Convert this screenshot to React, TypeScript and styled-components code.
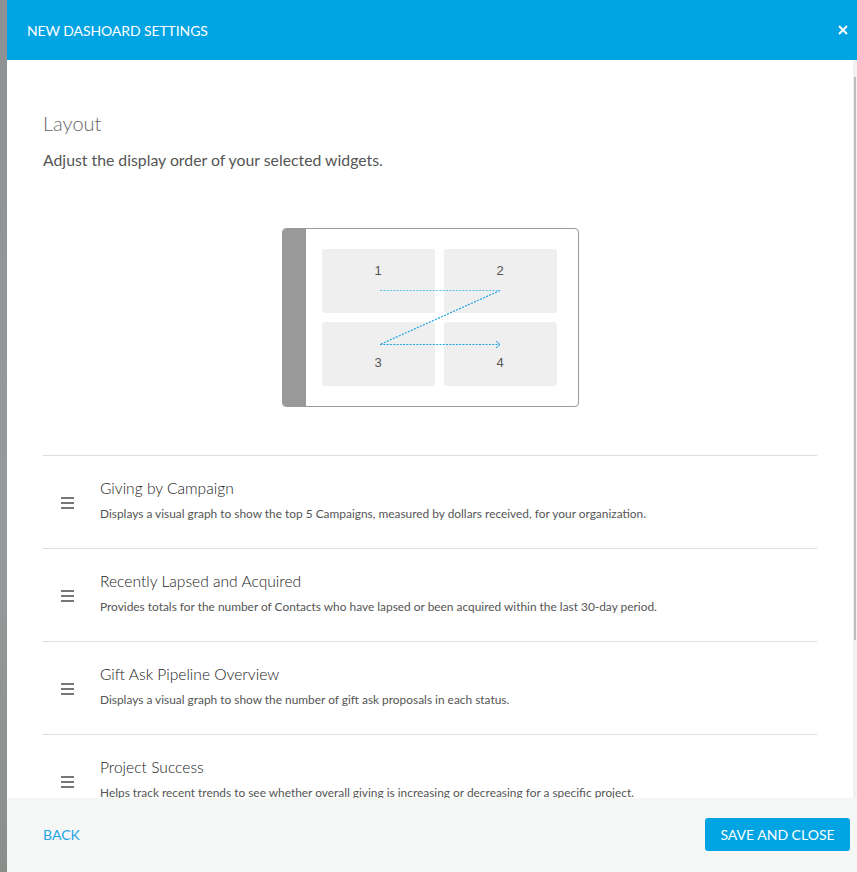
import styled, { createGlobalStyle } from "styled-components";

const GlobalStyle = createGlobalStyle`
  html, body {
    margin: 0;
    padding: 0;
    height: 100%;
    overflow: hidden;
    background: linear-gradient(180deg, #8e9193 0%, #979a9b 60%, #8a8f8c 100%);
  }
  #root {
    height: 100%;
  }
  * {
    box-sizing: border-box;
  }
`;

const Page = styled.div`
  height: 872px;
  display: flex;
  padding-left: 7px;
  font-family: Lato, "Open Sans", sans-serif;
`;

const Modal = styled.div`
  flex: 1;
  display: flex;
  flex-direction: column;
  background: #fff;
  min-width: 0;
`;

const Header = styled.div`
  height: 60px;
  flex-shrink: 0;
  background-color: #00a4e3;
  display: flex;
  align-items: center;
  justify-content: space-between;
  padding: 0 9px 0 20px;
  color: #fff;
`;

const HeaderTitle = styled.h1`
  margin: 0;
  font-size: 14px;
  font-weight: 400;
  letter-spacing: -0.1px;
`;

const CloseBtn = styled.button`
  border: none;
  background: none;
  padding: 0;
  width: 10px;
  height: 10px;
  display: flex;
  cursor: pointer;
`;

const BodyFrame = styled.div`
  flex: 1;
  min-height: 0;
  display: flex;
  border-right: 4px solid #f1f1f1;
`;

const Body = styled.div`
  flex: 1;
  overflow-y: auto;
  padding: 0 36px;
  &::-webkit-scrollbar {
    width: 0;
  }
`;

const ScrollThumb = styled.div`
  width: 2px;
  margin: 17px -3px 0 1px;
  height: 563px;
  background: #bdbdbd;
`;

const SectionTitle = styled.h2`
  margin: 51px 0 0;
  font-size: 20px;
  font-weight: 300;
  color: #666;
  line-height: 24px;
`;

const Intro = styled.p`
  margin: 15px 0 0;
  font-size: 15.8px;
  color: #555;
  line-height: 20px;
`;

const DiagramWrap = styled.div`
  display: flex;
  justify-content: center;
  margin: 58px 0 48px;
`;

const Diagram = styled.div`
  position: relative;
  width: 297px;
  height: 179px;
  border: 1px solid #999;
  border-radius: 4px;
  display: flex;
  overflow: hidden;
`;

const SideStrip = styled.div`
  width: 23px;
  background: #999;
`;

const TileGrid = styled.div`
  flex: 1;
  display: grid;
  grid-template-columns: 113px 113px;
  grid-template-rows: 64px 64px;
  gap: 9px;
  padding: 20px 0 0 16px;
`;

const Tile = styled.div<{ $bottom?: boolean }>`
  background: #efefef;
  border-radius: 3px;
  display: flex;
  justify-content: center;
  align-items: ${(p) => (p.$bottom ? "flex-end" : "flex-start")};
  padding: ${(p) => (p.$bottom ? "0 0 15px" : "14px 0 0")};
  font-family: "Liberation Sans", Arial, sans-serif;
  font-size: 13px;
  color: #555;
  line-height: 16px;
`;

const Arrows = styled.svg`
  position: absolute;
  left: 0;
  top: 0;
  pointer-events: none;
`;

const WidgetList = styled.div`
  border-bottom: 1px solid #ddd;
  margin-bottom: 190px;
`;

const WidgetRow = styled.div`
  height: 93px;
  border-top: 1px solid #ddd;
  display: flex;
  align-items: flex-start;
  padding-left: 18px;
  gap: 26px;
`;

const Handle = styled.div`
  width: 13px;
  display: flex;
  flex-direction: column;
  gap: 3.5px;
  margin-top: 41px;
  span {
    height: 1.5px;
    background: #777;
  }
`;

const WidgetText = styled.div`
  display: flex;
  flex-direction: column;
  gap: 8px;
  margin-top: 22px;
`;

const WidgetTitle = styled.div`
  font-size: 15.6px;
  font-weight: 300;
  color: #222;
  line-height: 20px;
`;

const WidgetDesc = styled.div`
  font-size: 11.9px;
  color: #555;
  line-height: 16px;
`;

const Footer = styled.div`
  height: 74px;
  flex-shrink: 0;
  background: #f5f6f6;
  display: flex;
  align-items: center;
  justify-content: space-between;
  padding: 0 7px 2px 36px;
`;

const BackLink = styled.a`
  font-size: 14px;
  line-height: 17px;
  color: #1ea5e3;
  cursor: pointer;
`;

const SaveBtn = styled.button`
  height: 33px;
  width: 145px;
  border: none;
  border-radius: 3px;
  background: #00a4e3;
  color: #fff;
  font-family: Lato, sans-serif;
  font-size: 14px;
  cursor: pointer;
`;

const widgets = [
  {
    title: "Giving by Campaign",
    desc: "Displays a visual graph to show the top 5 Campaigns, measured by dollars received, for your organization.",
  },
  {
    title: "Recently Lapsed and Acquired",
    desc: "Provides totals for the number of Contacts who have lapsed or been acquired within the last 30-day period.",
  },
  {
    title: "Gift Ask Pipeline Overview",
    desc: "Displays a visual graph to show the number of gift ask proposals in each status.",
  },
  {
    title: "Project Success",
    desc: "Helps track recent trends to see whether overall giving is increasing or decreasing for a specific project.",
  },
];

export default function App() {
  return (
    <>
      <GlobalStyle />
      <Page>
        <Modal>
          <Header>
            <HeaderTitle>NEW DASHOARD SETTINGS</HeaderTitle>
            <CloseBtn aria-label="Close">
              <svg width="10" height="10" viewBox="0 0 10 10">
                <path d="M1 1L9 9M9 1L1 9" stroke="#fff" strokeWidth="2" />
              </svg>
            </CloseBtn>
          </Header>
          <BodyFrame>
            <Body>
              <SectionTitle>Layout</SectionTitle>
              <Intro>Adjust the display order of your selected widgets.</Intro>
              <DiagramWrap>
                <Diagram>
                  <SideStrip />
                  <TileGrid>
                    <Tile>1</Tile>
                    <Tile>2</Tile>
                    <Tile $bottom>3</Tile>
                    <Tile $bottom>4</Tile>
                  </TileGrid>
                  <Arrows width="297" height="179" viewBox="0 0 297 179">
                    <g stroke="#1ea3e2" strokeWidth="1.2" fill="none" strokeDasharray="2 1.3">
                      <path d="M97 61.5H217" stroke="#5cc0ec" />
                      <path d="M217 61.5L97 115.5" />
                      <path d="M97 115.5H217" />
                    </g>
                    <path d="M213 112L217 115.5L213 119" stroke="#1ea3e2" strokeWidth="1" fill="none" />
                  </Arrows>
                </Diagram>
              </DiagramWrap>
              <WidgetList>
                {widgets.map((w) => (
                  <WidgetRow key={w.title}>
                    <Handle>
                      <span />
                      <span />
                      <span />
                    </Handle>
                    <WidgetText>
                      <WidgetTitle>{w.title}</WidgetTitle>
                      <WidgetDesc>{w.desc}</WidgetDesc>
                    </WidgetText>
                  </WidgetRow>
                ))}
              </WidgetList>
            </Body>
            <ScrollThumb />
          </BodyFrame>
          <Footer>
            <BackLink>BACK</BackLink>
            <SaveBtn>SAVE AND CLOSE</SaveBtn>
          </Footer>
        </Modal>
      </Page>
    </>
  );
}
